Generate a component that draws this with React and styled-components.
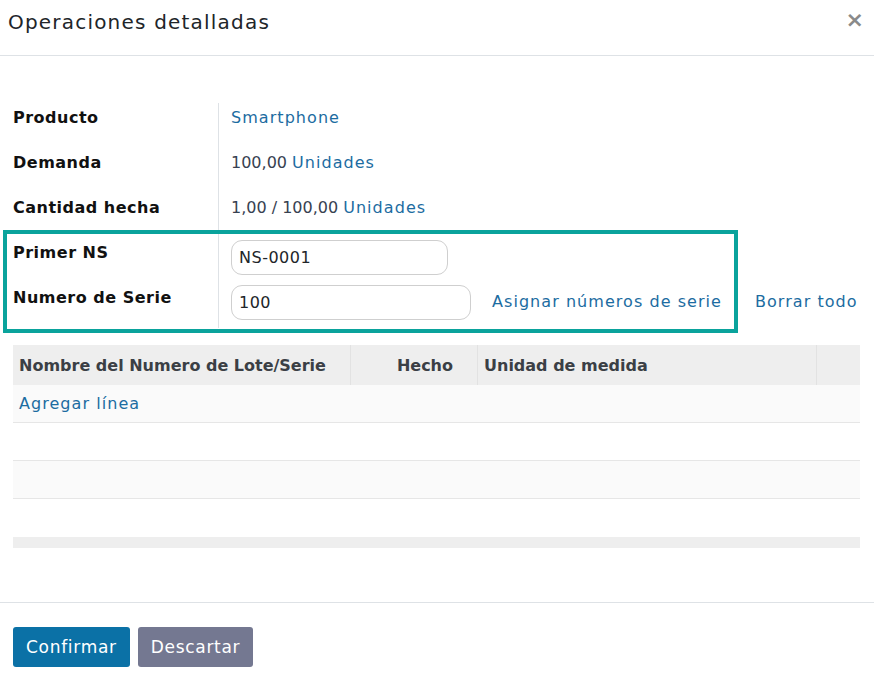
import styled, { createGlobalStyle } from "styled-components";

const GlobalStyle = createGlobalStyle`
  body {
    margin: 0;
    background: #fff;
    font-family: "DejaVu Sans", "Noto Sans", sans-serif;
    color: #212529;
  }
`;

const Modal = styled.div`
  width: 874px;
  height: 684px;
  display: flex;
  flex-direction: column;
  background: #fff;
`;

const Header = styled.div`
  height: 56px;
  box-sizing: border-box;
  display: flex;
  align-items: center;
  justify-content: space-between;
  padding: 0 10px 12px 8px;
  border-bottom: 1px solid #dee2e6;
`;

const Title = styled.h4`
  margin: 0;
  font-size: 20px;
  font-weight: 500;
  letter-spacing: 1.2px;
  color: #212529;
`;

const Close = styled.span`
  font-size: 22px;
  font-weight: 700;
  color: #8a8a8a;
  line-height: 1;
  margin-top: -4px;
`;

const Body = styled.div`
  flex: 1;
  padding: 47px 14px 0 13px;
`;

const FormGrid = styled.div`
  display: grid;
  grid-template-columns: 206px 1fr;
  position: relative;
`;

const Highlight = styled.div`
  position: absolute;
  left: -10px;
  top: 127px;
  width: 735px;
  height: 103px;
  box-sizing: border-box;
  border: 4px solid #0aa39c;
  pointer-events: none;
`;

const Label = styled.div`
  font-weight: 700;
  font-size: 16px;
  letter-spacing: 0.5px;
  color: #111;
  height: 45px;
  padding-top: 5px;
  box-sizing: border-box;
  border-right: 1px solid #dee2e6;
`;

const Value = styled.div`
  height: 45px;
  display: flex;
  align-items: flex-start;
  gap: 5px;
  padding-left: 12px;
  padding-top: ${(p) => (p.$input ? "0" : "5px")};
  box-sizing: border-box;
  font-size: 16px;
  color: #374151;
`;

const Link = styled.a`
  color: #1c6ca1;
  text-decoration: none;
  font-size: 16px;
  letter-spacing: 1.05px;
  margin-left: ${(p) => p.$gap || 0}px;
  margin-top: ${(p) => p.$top || 0}px;
`;

const Input = styled.div`
  width: ${(p) => p.$w}px;
  height: 35px;
  box-sizing: border-box;
  border: 1px solid #cfcfcf;
  border-radius: 11px;
  padding: 0 7px;
  display: flex;
  align-items: center;
  font-size: 16px;
  letter-spacing: 0.5px;
  color: #212529;
  margin-top: ${(p) => p.$top || 0}px;
`;

const Table = styled.div`
  margin-top: 17px;
  width: 847px;
`;

const Row = styled.div`
  display: grid;
  grid-template-columns: 338px 127px 339px 43px;
  height: ${(p) => p.$h || 38}px;
  background: ${(p) => p.$bg || "#fff"};
  border-bottom: ${(p) => (p.$line ? "1px solid #e6e6e6" : "none")};
  box-sizing: border-box;
`;

const Th = styled.div`
  display: flex;
  align-items: center;
  justify-content: ${(p) => (p.$right ? "flex-end" : "flex-start")};
  padding: 0 ${(p) => (p.$right ? "24px" : "6px")};
  font-weight: 600;
  font-size: 16px;
  color: #3b3f45;
  white-space: nowrap;
  border-right: ${(p) => (p.$last ? "none" : "1px solid #e2e2e2")};
`;

const Td = styled.div`
  grid-column: 1 / -1;
  display: flex;
  align-items: center;
  padding: 0 6px;
`;

const Footer = styled.div`
  border-top: 1px solid #dee2e6;
  height: 82px;
  box-sizing: border-box;
  display: flex;
  gap: 8px;
  padding: 24px 13px 0;
`;

const Button = styled.button`
  height: 40px;
  padding: 0 13px;
  border: none;
  border-radius: 3px;
  font-family: inherit;
  font-size: 17px;
  letter-spacing: 0.7px;
  color: #fff;
  background: ${(p) => (p.$primary ? "#0b71a6" : "#747891")};
`;

export default function App() {
  return (
    <>
      <GlobalStyle />
      <Modal>
        <Header>
          <Title>Operaciones detalladas</Title>
          <Close>×</Close>
        </Header>
        <Body>
          <FormGrid>
            <Label>Producto</Label>
            <Value>
              <Link>Smartphone</Link>
            </Value>
            <Label>Demanda</Label>
            <Value>
              100,00 <Link>Unidades</Link>
            </Value>
            <Label>Cantidad hecha</Label>
            <Value>
              1,00 / 100,00 <Link>Unidades</Link>
            </Value>
            <Label>Primer NS</Label>
            <Value $input>
              <Input $w={217} $top={2}>NS-0001</Input>
            </Value>
            <Label>Numero de Serie</Label>
            <Value $input>
              <Input $w={240} $top={2}>100</Input>
              <Link $gap={16} $top={9}>Asignar números de serie</Link>
              <Link $gap={28} $top={9}>Borrar todo</Link>
            </Value>
            <Highlight />
          </FormGrid>
          <Table>
            <Row $h={40} $bg="#eeeeee">
              <Th>Nombre del Numero de Lote/Serie</Th>
              <Th $right>Hecho</Th>
              <Th>Unidad de medida</Th>
              <Th $last />
            </Row>
            <Row $bg="#fafafa" $line>
              <Td>
                <Link>Agregar línea</Link>
              </Td>
            </Row>
            <Row $line />
            <Row $bg="#fafafa" $line />
            <Row />
            <Row $h={11} $bg="#eeeeee" />
          </Table>
        </Body>
        <Footer>
          <Button $primary>Confirmar</Button>
          <Button>Descartar</Button>
        </Footer>
      </Modal>
    </>
  );
}
